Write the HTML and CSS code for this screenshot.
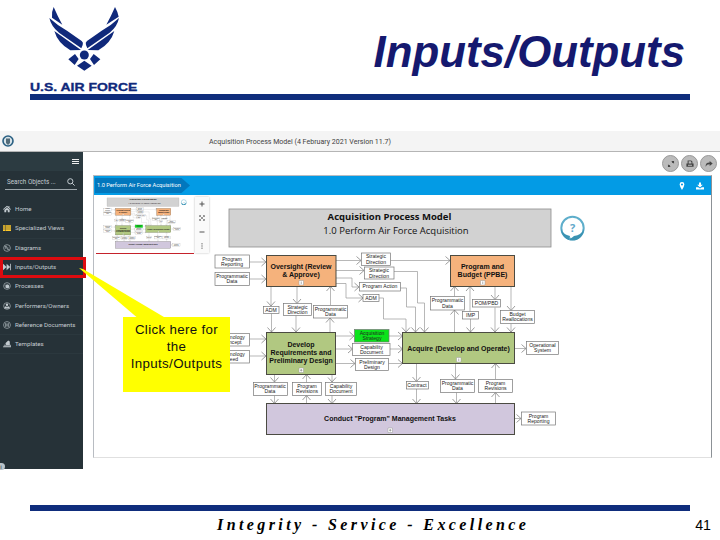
FILE: index.html
```html
<!DOCTYPE html>
<html>

<head>
  <meta charset="utf-8">
  <title>Inputs/Outputs</title>
  <link rel="stylesheet" href="styles.css">
</head>

<body>

  <header class="slide-header">
    <div class="logo">
      <svg width="72" height="66" viewBox="84 18 216 198">
        <path d="M101 21 Q112 47 127 74 L96 53 Q94 36 101 21Z M88 54 Q113 77 141 92 L185 123 Q191 128 188 135 L184 145 L117 98 Q94 80 88 54Z M103 93 L183 150 L151 151 Q113 129 103 93Z"/>
        <path d="M285 21 Q274 47 259 74 L296 50 Q293 35 285 21Z M297 54 Q273 77 245 92 L201 123 Q195 128 198 135 L202 145 L269 98 Q292 80 297 54Z M283 93 L203 150 L235 151 Q273 129 283 93Z"/>
        <circle cx="193" cy="165" r="13.500"/>
        <path d="M145 178 L165 162 L176 177 L164 195Z M241 178 L221 162 L210 177 L222 195Z M193 182 L215 197 L193 212 L171 197Z"/>
      </svg>
      <div class="logo-text">U.S. AIR FORCE</div>
    </div>
    <h1>Inputs/Outputs</h1>
  </header>
  <div class="rule"></div>

  <main class="app">
    <div class="topbar">
      <svg class="seal" width="12" height="12" viewBox="0 0 12 12">
        <circle cx="6" cy="6" r="5" fill="#d8e3e8" stroke="#295f82" stroke-width="1.6"/>
        <path d="M4 4 L5 3 L6 4 L7 3 L8 4 V8 L6 10 L4 8Z" fill="#536b78"/>
      </svg>
      <span>Acquisition Process Model (4 February 2021 Version 11.7)</span>
    </div>

    <div class="app-body">
      <nav class="sidebar">
        <div class="menu-row"><span class="burger"></span></div>
        <div class="search">
          <span>Search Objects ...</span>
          <svg width="8" height="8" viewBox="0 0 8 8"><circle cx="3.3" cy="3.3" r="2.6"/><path d="M5.3 5.3 L7.6 7.6"/></svg>
        </div>
        <ul>
          <li><svg viewBox="0 0 10 10"><path class="solid" d="M0 5.2 L5 1 L6.8 2.5 V1.3 H8 V3.5 L10 5.2 L9.3 6 L5 2.4 L.7 6Z M1.7 6 L5 3.4 L8.3 6 V9 H6 V6.7 H4 V9 H1.7Z"/></svg>Home</li>
          <li><svg viewBox="0 0 10 10"><path fill="#fdc92b" d="M0 1.5 H2.5 V3.5 H0Z M3 1.5 H10 V3.5 H3Z M0 4.1 H2.5 V6 H0Z M3 4.1 H10 V6 H3Z M0 6.6 H2.5 V8.6 H0Z M3 6.6 H10 V8.6 H3Z"/></svg>Specialized Views</li>
          <li><svg viewBox="0 0 10 10"><circle cx="5" cy="5" r="4.2"/><path d="M2 3 H4.5 V5 L6 7 H8 M6 7 V4 M3 3 V6"/></svg>Diagrams</li>
          <li><svg viewBox="0 0 10 10"><path class="solid" d="M0 1 L4.5 5 V1 L9 5 V1 H10 V9 H9 V5 L4.5 9 V5 L0 9Z"/></svg>Inputs/Outputs</li>
          <li><svg viewBox="0 0 10 10"><circle cx="5" cy="5" r="4.2"/><circle class="solid" cx="5.5" cy="5.5" r="2.3"/><path d="M2 4 H7 M3 6.5 H8"/></svg>Processes</li>
          <li><svg viewBox="0 0 10 10"><circle cx="5" cy="5" r="4.2"/><circle class="solid" cx="5" cy="3.5" r="1.5"/><path class="solid" d="M1.5 8 Q2 5 4 5.3 L5 7 L6 5.3 Q8 5 8.5 8Z"/></svg>Performers/Owners</li>
          <li><svg viewBox="0 0 10 10"><circle cx="5" cy="5" r="4.3"/><path d="M3.3 2.5 V7.5 M6.7 2.5 V7.5 M3.3 4 H6.7 M3.3 6 H6.7"/></svg>Reference Documents</li>
          <li><svg viewBox="0 0 10 10"><path class="solid" d="M0 9 L1.5 6 H4 L3 4 L6.5 .5 L8.5 2 V6 H9.5 L10 9Z"/><path d="M1 7.3 H9" stroke="#263238"/></svg>Templates</li>
        </ul>
        <span class="info">i</span>
      </nav>

      <section class="content">
        <div class="actions">
          <span class="round"><svg viewBox="0 0 10 10"><path d="M3.8 6.2 L1.5 8.5 M6.2 3.8 L8.5 1.5" stroke="#444"/><path d="M5.300 1.200 H8.800 V4.700Z M1.200 5.300 V8.800 H4.700Z"/></svg></span>
          <span class="round"><svg viewBox="0 0 10 10"><path d="M2 .500 H6.5 L8 2 V4.300 H9.500 V8.500 H.500 V4.300 H2Z"/><path d="M3.300 1.700 H6 L6.800 2.700 V4.300 H3.300Z M2.500 6 H7.500 V7.200 H2.500Z" fill="#bbb"/></svg></span>
          <span class="round"><svg viewBox="0 0 10 10"><path d="M.8 8.5 Q.3 3.2 5.8 3.2 V1.3 L9.6 4.4 L5.8 7.4 V5.4 Q2 5.2 .8 8.5Z"/></svg></span>
        </div>

        <div class="panel">
          <div class="panel-head">
            <span class="crumb">1.0 Perform Air Force Acquisition</span>
            <span class="head-icons">
              <svg width="8" height="8" viewBox="0 0 8 8"><path fill-rule="evenodd" d="M4 0 Q6.4 0 6.4 2.4 Q6.2 4.2 4 8 Q1.8 4.2 1.6 2.4 Q1.6 0 4 0Z M4 1.5 A1 1 0 1 0 4 3.6 A1 1 0 1 0 4 1.5Z"/></svg>
              <svg width="8" height="8" viewBox="0 0 8 8"><path d="M3 .5 H5 V2.8 H6.8 L4 5.4 L1.2 2.8 H3Z M0 5.2 H2.2 L4 6.6 L5.8 5.2 H8 V7.6 H0Z"/></svg>
            </span>
          </div>

          <div class="canvas">
            <svg class="diagram" width="617" height="262" viewBox="94 195 617 262">
              <defs>
                <marker id="arrow" markerUnits="userSpaceOnUse" markerWidth="7" markerHeight="10" refX="5.5" refY="5" orient="auto">
                  <path d="M1 1 L5.5 5 L1 9" fill="none" stroke="#858585" stroke-width=".8"/>
                </marker>
              </defs>
              <g id="model">
                <rect class="title-box" x="229" y="209" width="322" height="38"/>
                <text class="model-title" x="389.5" y="220">Acquisition Process Model</text>
                <text class="model-sub" x="396" y="234">1.0 Perform Air Force Acquisition</text>

                <g class="flows">
                  <!-- into and out of Oversight -->
                  <path d="M249.5 262 H266"/><path d="M249.5 279 H266"/>
                  <path d="M336 260.5 H361"/><path d="M390.5 260.5 H450"/>
                  <path d="M336 270.5 H364"/><path d="M336 278 H352 V287 H359"/>
                  <path d="M336 283.5 H346 V298 H363"/>
                  <path d="M394 271.5 H417.5 V303 H424.5 V332"/>
                  <path d="M400.5 288 H406.5 V307 H415.5 V332"/>
                  <path d="M379 298 H383.5 V319 H406 V332"/>
                  <path d="M271 286.5 V306"/><path d="M271.5 313.5 V332"/>
                  <path d="M297 286.5 V303.5"/><path d="M296 315.5 V332"/>
                  <path d="M330.5 305 V286.5"/><path d="M330 332 V318"/>
                  <!-- Develop -->
                  <path d="M249.5 339 H266"/><path d="M249.5 356 H266"/>
                  <path d="M336 336 H354"/><path d="M389 336 H402.5"/>
                  <path d="M336 349 H352.5"/><path d="M390 349 H402.5"/>
                  <path d="M336 363.5 H355"/><path d="M388.5 363.5 H402.5"/>
                  <path d="M274.5 374.5 V382"/><path d="M274.5 395.5 V403.5"/>
                  <path d="M306.5 382.5 V374.5"/><path d="M306.5 403.5 V395.5"/>
                  <path d="M332 374.5 V382"/><path d="M332 395.5 V403.5"/>
                  <!-- Acquire and Budget -->
                  <path d="M416.5 363.5 V381.5"/><path d="M416.5 389 V403.5"/>
                  <path d="M455.5 363.5 V379"/><path d="M456.5 392.5 V403.5"/>
                  <path d="M495.5 379 V363.5"/><path d="M495.5 403.5 V392.5"/>
                  <path d="M454.5 332 V310"/><path d="M454.5 296.5 V286.5"/>
                  <path d="M470 311.5 V286.5"/><path d="M470.5 319 V332"/>
                  <path d="M495 286.5 V299.5"/><path d="M495 307.5 V332"/>
                  <path d="M511 286.5 V310.5"/><path d="M511 324 V332"/>
                  <path d="M514.5 348.5 H526"/><path d="M514.5 418.5 H521"/>
                </g>

                <g class="io">
                  <rect x="215" y="255" width="34.5" height="13"/><text x="232" y="260.5">Program<tspan x="232" dy="5.3">Reporting</tspan></text>
                  <rect x="215" y="272.5" width="34.5" height="13"/><text x="232" y="277.8">Programmatic<tspan x="232" dy="5.3">Data</tspan></text>
                  <rect x="361.5" y="253" width="29" height="12.5"/><text x="376" y="258.3">Strategic<tspan x="376" dy="5.3">Direction</tspan></text>
                  <rect x="364.5" y="267" width="29.5" height="12"/><text x="379" y="272.3">Strategic<tspan x="379" dy="5.3">Direction</tspan></text>
                  <rect x="359.5" y="282.5" width="41" height="8.5"/><text x="380" y="288.3">Program Action</text>
                  <rect x="363" y="294.5" width="16" height="7"/><text x="371" y="300">ADM</text>
                  <rect x="263.5" y="306.5" width="15.5" height="7"/><text x="271" y="312">ADM</text>
                  <rect x="283.5" y="303.5" width="28" height="12"/><text x="297.5" y="308.8">Strategic<tspan x="297.5" dy="5.3">Direction</tspan></text>
                  <rect x="313.5" y="305.5" width="34" height="12.5"/><text x="330.5" y="310.8">Programmatic<tspan x="330.5" dy="5.3">Data</tspan></text>
                  <rect x="215" y="333.5" width="34.5" height="12.5"/><text x="232" y="338.6">Technology<tspan x="232" dy="5.3">Concept</tspan></text>
                  <rect x="215" y="350.5" width="34.5" height="12.5"/><text x="232" y="355.8">Technology<tspan x="232" dy="5.3">Need</tspan></text>
                  <rect class="hot" x="354.5" y="329.5" width="34.5" height="12.5"/><text x="372" y="334.6">Acquisition<tspan x="372" dy="5.3">Strategy</tspan></text>
                  <rect x="352.5" y="343.5" width="37.5" height="12"/><text x="371.5" y="348.5">Capability<tspan x="371.5" dy="5.3">Document</tspan></text>
                  <rect x="355.5" y="358.5" width="33" height="12"/><text x="372" y="363.8">Preliminary<tspan x="372" dy="5.3">Design</tspan></text>
                  <rect x="253.5" y="382.5" width="34" height="13"/><text x="270" y="387.8">Programmatic<tspan x="270" dy="5.3">Data</tspan></text>
                  <rect x="292.5" y="382.5" width="29" height="13"/><text x="307" y="387.8">Program<tspan x="307" dy="5.3">Revisions</tspan></text>
                  <rect x="325.5" y="382.5" width="31" height="13"/><text x="341" y="387.8">Capability<tspan x="341" dy="5.3">Document</tspan></text>
                  <rect x="406.5" y="381.5" width="22" height="7.5"/><text x="417" y="387.3">Contract</text>
                  <rect x="440.5" y="379.5" width="34" height="13"/><text x="457.5" y="384.6">Programmatic<tspan x="457.5" dy="5.3">Data</tspan></text>
                  <rect x="478.5" y="379.5" width="34" height="13"/><text x="495.5" y="384.6">Program<tspan x="495.5" dy="5.3">Revisions</tspan></text>
                  <rect x="526.5" y="341.5" width="32" height="13"/><text x="542.5" y="347">Operational<tspan x="542.5" dy="5.3">System</tspan></text>
                  <rect x="521.5" y="412" width="34" height="13"/><text x="538.5" y="417.5">Program<tspan x="538.5" dy="5.3">Reporting</tspan></text>
                  <rect x="430.5" y="296.5" width="34" height="13.5"/><text x="447.5" y="302.3">Programmatic<tspan x="447.5" dy="5.3">Data</tspan></text>
                  <rect x="472.5" y="299.5" width="28" height="7.5"/><text x="486.5" y="305.3">POM/PBD</text>
                  <rect x="462.5" y="311.5" width="16" height="7.5"/><text x="470.5" y="317.3">IMP</text>
                  <rect x="500.5" y="310.5" width="34" height="13"/><text x="517.5" y="315.6">Budget<tspan x="517.5" dy="5.3">Reallocations</tspan></text>
                </g>

                <g class="process">
                  <rect class="orange" x="266.5" y="255.5" width="69.5" height="31"/>
                  <text x="301" y="268.8">Oversight (Review<tspan x="301" dy="8">&amp; Approve)</tspan></text>
                  <rect class="orange" x="450.5" y="255.5" width="64" height="31"/>
                  <text x="482.5" y="268.8">Program and<tspan x="482.5" dy="8">Budget (PPBE)</tspan></text>
                  <rect class="green" x="266.5" y="332.5" width="69" height="42"/>
                  <text x="301" y="347.3">Develop<tspan x="301" dy="8">Requirements and</tspan><tspan x="301" dy="8">Preliminary Design</tspan></text>
                  <rect class="green" x="402.5" y="332.5" width="112" height="31"/>
                  <text x="458.5" y="350.5">Acquire (Develop and Operate)</text>
                  <rect class="purple" x="266.5" y="403.5" width="248" height="31"/>
                  <text x="390" y="421">Conduct "Program" Management Tasks</text>
                </g>
                <path class="plus-box" d="M299 280.5 h4.5 v4.5 h-4.5Z M480.5 280.5 h4.5 v4.5 h-4.5Z M299 368 h4.5 v4.5 h-4.5Z M456.5 357.5 h4.5 v4.5 h-4.5Z M388 428 h4.5 v4.5 h-4.5Z"/>
                <path class="plus" d="M301.25 281.5 v2.5 M482.75 281.5 v2.5 M301.25 369 v2.5 M300 370.25 h2.5 M458.75 358.5 v2.5 M390.25 429 v2.5 M389 430.25 h2.5"/>

                <g class="help">
                  <circle cx="572.5" cy="228" r="11.2" fill="#fff" stroke="#5eaecb" stroke-width="2"/>
                  <path d="M561 229 A11.5 11.5 0 0 0 584 229 Q581.5 235 574 236 L569 240 L570 236 Q563 234.5 561 229Z" fill="#3b93b3"/>
                  <text x="572.7" y="231.5">?</text>
                </g>
              </g>
            </svg>

            <div class="overview">
              <svg width="98" height="56" viewBox="96 198 98 56">
                <use href="#model" transform="translate(55.8 152.2) scale(.2236)"/>
              </svg>
              <div class="zoombar">
                <svg viewBox="0 0 8 8"><path d="M4 1.5 V6.5 M1.5 4 H6.5"/></svg>
                <svg class="fit" viewBox="0 0 8 8"><path d="M1.5 3 V1.5 H3 M5 1.5 H6.5 V3 M6.5 5 V6.5 H5 M3 6.5 H1.5 V5 M2 2 L6 6 M6 2 L2 6"/></svg>
                <svg viewBox="0 0 8 8"><path d="M1.5 4 H6.5"/></svg>
                <svg viewBox="0 0 8 8"><path d="M4 1.2 V2.4 M4 3.4 V4.6 M4 5.6 V6.8"/></svg>
              </div>
            </div>
          </div>
        </div>
      </section>
    </div>

    <div class="highlight"></div>
    <div class="callout">
      <svg width="90" height="52" viewBox="0 0 90 52"><path d="M0 0 L61 52 H90 L4 1Z"/></svg>
      <p>Click here for<br>the<br>Inputs/Outputs</p>
    </div>
  </main>

  <footer>
    <div class="rule"></div>
    <div class="footer-row">
      <span class="motto">Integrity - Service - Excellence</span>
      <span class="page-no">41</span>
    </div>
  </footer>

</body>

</html>
```
FILE: styles.css
```css
body {
  margin: 0;
  width: 720px;
  height: 540px;
  overflow: hidden;
  background: #fff;
  font-family: "Liberation Sans", Arial, sans-serif;
}

/* slide header */
.slide-header {
  display: flex;
  justify-content: space-between;
  height: 94px;
  padding: 0 35px 0 30px;
}

.logo {
  padding-top: 6px;
}

.logo svg {
  display: block;
  margin-left: 18px;
  fill: #10297b;
}

.logo-text {
  margin-top: 8px;
  font-size: 10.5px;
  line-height: 14px;
  font-weight: bold;
  color: #10297b;
  -webkit-text-stroke: .3px #10297b;
  white-space: nowrap;
  transform: scaleX(1.33);
  transform-origin: left;
}

h1 {
  margin: 26px 0 0;
  font-size: 43.8px;
  line-height: 51px;
  font-style: italic;
  color: #15196f;
}

.rule {
  width: 660px;
  height: 6px;
  margin-left: 30px;
  background: #0f2d7c;
}

/* application window */
.app {
  position: relative;
  height: 338px;
  margin-top: 31px;
  font-family: Roboto, sans-serif;
}

.topbar {
  display: flex;
  align-items: center;
  height: 20px;
  background: #f4f4f4;
  border-bottom: 1px solid #b5b5b5;
  font-size: 7.05px;
  color: #424242;
}

.seal {
  margin: 0 195px 0 2px;
}

.app-body {
  display: flex;
  height: 317px;
}

.sidebar {
  position: relative;
  width: 83px;
  background: #263238;
  color: #c3cbd0;
}

.menu-row {
  display: flex;
  justify-content: flex-end;
  align-items: center;
  height: 19px;
  padding-right: 4px;
  background: #2c3b41;
}

.burger {
  width: 7px;
  height: 1px;
  background: #eee;
  box-shadow: 0 -2px #eee, 0 2px #eee;
}

.search {
  display: flex;
  justify-content: space-between;
  align-items: center;
  height: 14px;
  margin: 4px 6px 0 5px;
  padding: 0 2px;
  border-bottom: 1px solid #9da6ab;
  font-size: 6.3px;
}

.search svg {
  fill: none;
  stroke: #c3cbd0;
}

.sidebar ul {
  margin: 10px 0 0;
  padding: 0;
  list-style: none;
}

.sidebar li {
  display: flex;
  align-items: center;
  gap: 4px;
  box-sizing: border-box;
  height: 19.3px;
  padding-left: 3px;
  border-bottom: 1px solid #2b383e;
  font-size: 6.15px;
  white-space: nowrap;
}

.sidebar li svg {
  width: 8px;
  height: 8px;
  fill: none;
  stroke: #b4bdc2;
  stroke-width: .8;
}

.sidebar li svg .solid,
.sidebar li svg path[fill] {
  stroke: none;
}

.sidebar li svg .solid {
  fill: #c3cbd0;
}

.info {
  position: absolute;
  left: -3px;
  bottom: -1px;
  width: 8px;
  height: 7px;
  border-radius: 4px;
  background: #b9c3c9;
  color: #263238;
  font-size: 6px;
  line-height: 7px;
  text-align: center;
}

.content {
  flex: 1;
  padding: 3px 8px 11px 10px;
}

.actions {
  display: flex;
  justify-content: flex-end;
  gap: 2px;
  height: 20px;
  margin-right: -5px;
}

.round {
  display: flex;
  align-items: center;
  justify-content: center;
  box-sizing: border-box;
  width: 17px;
  height: 17px;
  border: 1px solid #999;
  border-radius: 50%;
  background: #bbb;
}

.round svg {
  width: 8px;
  height: 8px;
  fill: #444;
}

.panel {
  box-sizing: border-box;
  height: 283px;
  border: 1px solid #b8bcc2;
  border-right-color: #8c9196;
  border-bottom-color: #e0e0e0;
}

.panel-head {
  display: flex;
  align-items: center;
  justify-content: space-between;
  height: 19px;
  background: #039be5;
}

.crumb {
  width: 93px;
  height: 15px;
  margin-left: 1px;
  padding-left: 2px;
  background: #0277bd;
  clip-path: polygon(0 0, 91% 0, 100% 50%, 91% 100%, 0 100%);
  color: #fff;
  font-size: 5.7px;
  line-height: 15px;
  white-space: nowrap;
}

.head-icons {
  display: flex;
  gap: 10px;
  margin-right: 7px;
  fill: #fff;
}

.canvas {
  position: relative;
}

.diagram {
  display: block;
}

/* process model */
.title-box {
  fill: #d2d2d2;
  stroke: #8c8c8c;
  stroke-width: .8;
}

.model-title,
.model-sub {
  font-family: "Open Sans", sans-serif;
  font-size: 9.5px;
  text-anchor: middle;
  fill: #111;
}

.model-title {
  font-weight: bold;
}

.flows path {
  fill: none;
  stroke: #999;
  stroke-width: .7;
  marker-end: url(#arrow);
}

.io rect {
  fill: #fff;
  stroke: #777;
  stroke-width: .7;
}

.io .hot {
  fill: #0be31b;
}

.io text {
  font-family: "Liberation Sans", Arial, sans-serif;
  font-size: 5.1px;
  text-anchor: middle;
  fill: #222;
}

.process rect {
  stroke: #4b4b42;
}

.process text {
  font-family: "Liberation Sans", Arial, sans-serif;
  font-size: 7px;
  font-weight: bold;
  text-anchor: middle;
  fill: #111;
}

.orange {
  fill: #f5b27c;
}

.green {
  fill: #b1c881;
}

.purple {
  fill: #d1c7dd;
}

.plus-box {
  fill: #fff;
  stroke: #999;
  stroke-width: .5;
}

.plus {
  stroke: #777;
  stroke-width: .6;
}

.help text {
  font-family: "Open Sans", sans-serif;
  font-size: 11px;
  font-weight: bold;
  text-anchor: middle;
  fill: #62a9cb;
}

/* overview map over the canvas */
.overview {
  position: absolute;
  top: 2px;
  left: 2px;
  display: flex;
}

.overview > svg {
  height: 56px;
  background: #fff;
  border-bottom: 1px solid #c5222b;
}

.zoombar {
  display: flex;
  flex-direction: column;
  justify-content: space-around;
  align-items: center;
  width: 14px;
  height: 56px;
  margin-left: 1px;
  background: #fafafa;
  box-shadow: 0 0 2px #bbb;
}

.zoombar svg {
  width: 8px;
  height: 8px;
  fill: none;
  stroke: #555;
}

.zoombar .fit {
  stroke-width: .6;
}

/* slide annotations */
.highlight {
  position: absolute;
  top: 126px;
  left: 0;
  box-sizing: border-box;
  width: 86px;
  height: 21px;
  border: 3px solid #dd0b0f;
}

.callout {
  position: absolute;
  top: 186px;
  left: 123px;
  width: 107px;
  height: 75px;
  background: #ff0;
}

.callout svg {
  position: absolute;
  top: -49px;
  left: -44px;
  fill: #ff0;
}

.callout p {
  position: relative;
  margin: 4px 0 0;
  font-family: "Liberation Sans", Arial, sans-serif;
  font-size: 13.3px;
  line-height: 17px;
  letter-spacing: .35px;
  text-align: center;
  color: #111;
}

/* slide footer */
footer {
  margin-top: 36px;
}

.footer-row {
  display: flex;
  justify-content: space-between;
  align-items: baseline;
  padding: 5px 9px 0 217px;
}

.motto {
  font-family: "Liberation Serif", "Times New Roman", serif;
  font-size: 16px;
  font-style: italic;
  font-weight: bold;
  letter-spacing: 3.4px;
}

.page-no {
  font-size: 14.2px;
}
```
